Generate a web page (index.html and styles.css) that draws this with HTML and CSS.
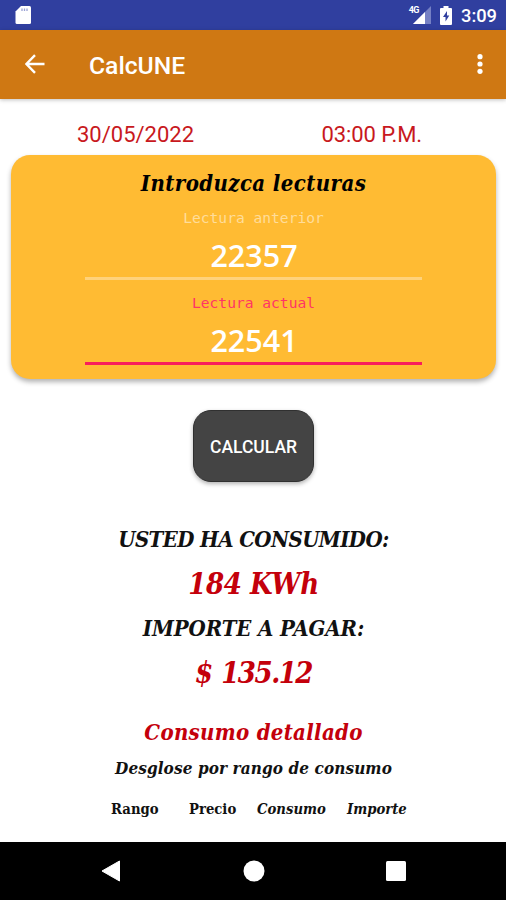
FILE: index.html
```html
<!DOCTYPE html>
<html lang="es">
<head>
    <meta charset="UTF-8">
    <meta name="viewport" content="width=device-width, initial-scale=1.0">
    <title>CalcUNE</title>
    <link rel="stylesheet" href="styles.css">
</head>
<body>
    <div class="status-bar">
        <svg class="sd-icon" width="18" height="20" viewBox="0 0 18 20">
            <path d="M7 1h8.500q1.500 0 1.500 1.500V17.500q0 1.500-1.500 1.500H3q-1.500 0-1.500-1.500V6.500z" fill="#fff"/>
            <path d="M8 3.500v2.500M10.500 3.500v2.500M13 3.500v2.500" stroke="#9aa2d4" stroke-width="1.300"/>
        </svg>
        <div class="status-right">
            <div class="signal">
                <span class="network">4G</span>
                <svg width="18" height="18" viewBox="0 0 18 18">
                    <path d="M0 18L18 0v18z" fill="#7580c4"/>
                    <path d="M0 18L12 6v12z" fill="#fff"/>
                </svg>
            </div>
            <svg class="battery" width="12" height="19" viewBox="0 0 12 19">
                <path d="M3.500 0h5v2H11q1 0 1 1v15q0 1-1 1H1q-1 0-1-1V3q0-1 1-1h2.500z" fill="#fff"/>
                <path d="M7 5L3 11h2.500v4.500L9.300 9.500H7z" fill="#303f9f"/>
            </svg>
            <span class="clock">3:09</span>
        </div>
    </div>
    <div class="toolbar">
        <svg class="back" width="20" height="20" viewBox="0 0 20 20">
            <path d="M19.500 10H1.700M10 1.200L1.400 10l8.600 8.800" fill="none" stroke="#fff" stroke-width="2.400"/>
        </svg>
        <h1>CalcUNE</h1>
        <svg class="more" width="6" height="20" viewBox="0 0 6 20">
            <circle cx="3" cy="2.700" r="2.600"/>
            <circle cx="3" cy="10" r="2.600"/>
            <circle cx="3" cy="17.300" r="2.600"/>
        </svg>
    </div>
    <main>
        <div class="date-row">
            <span class="date">30/05/2022</span>
            <span class="time">03:00 P.M.</span>
        </div>
        <div class="card">
            <h2>Introduzca lecturas</h2>
            <div class="field">
                <div class="label">Lectura anterior</div>
                <div class="value">22357</div>
            </div>
            <div class="field active">
                <div class="label">Lectura actual</div>
                <div class="value">22541</div>
            </div>
        </div>
        <button class="calc-btn">CALCULAR</button>
        <div class="results">
            <div class="caption consumed">USTED HA CONSUMIDO:</div>
            <div class="amount kwh">184 KWh</div>
            <div class="caption pay">IMPORTE A PAGAR:</div>
            <div class="amount price">$ 135.12</div>
        </div>
        <h3>Consumo detallado</h3>
        <div class="subtitle">Desglose por rango de consumo</div>
        <div class="columns">
            <span>Rango</span>
            <span class="precio">Precio</span>
            <span class="slanted consumo">Consumo</span>
            <span class="slanted">Importe</span>
        </div>
    </main>
    <div class="nav-bar">
        <svg width="20" height="22" viewBox="0 0 20 22"><path d="M1 11L18.500 1v20z" stroke="#fff" stroke-linejoin="round"/></svg>
        <svg width="22" height="22" viewBox="0 0 22 22"><circle cx="11" cy="11" r="10.500"/></svg>
        <svg width="20" height="20" viewBox="0 0 20 20"><rect width="20" height="20" rx="1.500"/></svg>
    </div>
</body>
</html>
```
FILE: styles.css
```css
*{
    box-sizing: border-box;
}
body{
    margin: 0;
    height: 900px;
    display: flex;
    flex-direction: column;
    overflow: hidden;
    font-family: Roboto, sans-serif;
    background-color: #fff;
}
svg{
    display: block;
    flex: none;
}
h1, h2, h3{
    margin: 0;
}
.status-bar{
    height: 30px;
    padding: 0 9px 0 14px;
    display: flex;
    justify-content: space-between;
    align-items: center;
    background-color: #303f9f;
    color: #fff;
}
.status-right{
    display: flex;
    align-items: center;
}
.signal{
    display: flex;
    align-items: flex-end;
    height: 18px;
    margin-right: 9px;
}
.network{
    align-self: flex-start;
    margin-right: -6px;
    font-size: 9px;
    line-height: 9px;
    font-weight: bold;
    letter-spacing: -0.5px;
}
.clock{
    margin-left: 8px;
    font-size: 18.3px;
    font-weight: 500;
    line-height: 30px;
    padding-top: 1px;
}
.battery{
    margin-right: 1px;
}
.toolbar{
    height: 69px;
    padding: 0 23px 1px 25px;
    display: flex;
    align-items: center;
    background-color: #cf7813;
    color: #fff;
    box-shadow: 0 1px 4px rgba(0, 0, 0, 0.25);
}
.toolbar h1{
    flex: 1;
    margin-left: 44px;
    font-size: 24.7px;
    font-weight: 500;
    line-height: 30px;
    padding-top: 3px;
}
.more{
    fill: #fff;
}
main{
    flex: 1;
    padding: 19px 10px 0 11px;
    display: flex;
    flex-direction: column;
    align-items: center;
    font-family: "DejaVu Serif Condensed", "DejaVu Serif", serif;
    font-weight: bold;
    color: #111;
    white-space: nowrap;
}
.date-row{
    align-self: stretch;
    display: flex;
    justify-content: space-between;
    height: 37px;
    padding: 0 74px 0 66px;
    font-family: Roboto, sans-serif;
    font-size: 22px;
    font-weight: 400;
    line-height: 33px;
    color: #c81820;
}
.time{
    letter-spacing: -0.1px;
}
.card{
    align-self: stretch;
    height: 224px;
    padding: 12px 74px 0;
    border-radius: 19px;
    background-color: #ffbb33;
    text-align: center;
    box-shadow: 0 3px 5px rgba(0, 0, 0, 0.3);
}
.card h2{
    font-size: 22px;
    line-height: 32px;
    letter-spacing: 0.4px;
    font-style: italic;
    color: #000;
}
.field{
    height: 85px;
    padding-top: 9px;
}
.label{
    height: 20px;
    font-family: "DejaVu Sans Mono", monospace;
    font-size: 14.6px;
    font-weight: normal;
    line-height: 20px;
    color: #ffdd9a;
}
.value{
    height: 52px;
    border-bottom: 3px solid #ffd27b;
    font-family: "Open Sans", "Noto Sans", sans-serif;
    font-size: 30.5px;
    font-weight: 600;
    line-height: 55px;
    color: #fff;
    text-indent: 1px;
}
.active .label{
    color: #ff3565;
}
.active .value{
    border-color: #f81d5b;
}
.calc-btn{
    width: 121px;
    height: 72px;
    margin-top: 31px;
    padding: 1px 0 0;
    border: 1px solid #303030;
    border-radius: 18px;
    background-color: #444;
    color: #fff;
    font-family: Roboto, sans-serif;
    font-size: 17.5px;
    font-weight: 500;
    box-shadow: 0 2px 4px rgba(0, 0, 0, 0.3);
}
.results{
    margin-top: 35px;
    text-align: center;
    font-style: italic;
}
.caption{
    height: 44px;
    font-size: 22px;
    line-height: 44px;
}
.consumed{
    letter-spacing: -0.6px;
}
.pay{
    letter-spacing: -0.1px;
}
.amount{
    height: 45px;
    font-size: 29px;
    line-height: 46px;
    color: #c4000b;
}
.kwh{
    letter-spacing: -0.4px;
}
.price{
    letter-spacing: -1.5px;
    word-spacing: 2px;
}
h3{
    margin-top: 17px;
    font-size: 22px;
    line-height: 40px;
    letter-spacing: 0.3px;
    font-style: italic;
    color: #c4000b;
}
.subtitle{
    font-size: 17px;
    line-height: 32px;
    letter-spacing: 0.1px;
    font-style: italic;
}
.columns{
    align-self: stretch;
    display: flex;
    padding: 10px 0 0 100px;
    font-size: 14.7px;
    line-height: 30px;
}
.columns span{
    width: 78px;
}
.columns .precio{
    width: 68px;
}
.columns .consumo{
    width: 90px;
}
.columns .slanted{
    font-style: italic;
}
.nav-bar{
    height: 58px;
    padding: 0 100px 0 101px;
    display: flex;
    justify-content: space-between;
    align-items: center;
    background-color: #000;
    fill: #fff;
}
```
